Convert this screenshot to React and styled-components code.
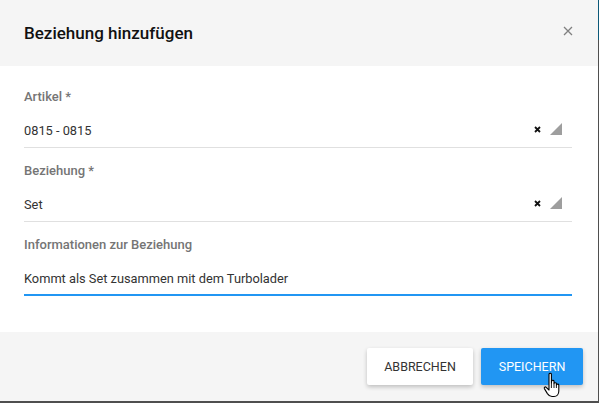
import React from "react";
import styled, { createGlobalStyle } from "styled-components";

const GlobalStyle = createGlobalStyle`
  html, body {
    margin: 0;
    padding: 0;
    width: 100%;
    height: 100%;
    overflow: hidden;
  }
  body {
    background: linear-gradient(#0c5878 0 40px, #4f4f4f 40px);
    font-family: Roboto, "Liberation Sans", Arial, sans-serif;
  }
`;

const fields = [
  { label: "Artikel *", value: "0815 - 0815", type: "select" },
  { label: "Beziehung *", value: "Set", type: "select" },
  { label: "Informationen zur Beziehung", value: "Kommt als Set zusammen mit dem Turbolader", type: "text" }
];

function App() {
  return (
    <>
      <GlobalStyle />
      <StDialog>
        <StHeader>
          <h2>Beziehung hinzufügen</h2>
          <StClose aria-label="schließen">
            <svg width="10" height="10" viewBox="0 0 10 10">
              <path d="M1 1 L9 9 M9 1 L1 9" stroke="#808080" strokeWidth="1.3" fill="none" />
            </svg>
          </StClose>
        </StHeader>

        <StBody>
          {fields.map((f) => (
            <StField key={f.label}>
              <label>{f.label}</label>
              <StInput focused={f.type === "text"}>
                <span>{f.value}</span>
                {f.type === "select" && (
                  <div className="icons">
                    <svg width="7" height="7" viewBox="0 0 7 7">
                      <path d="M1 1 L6 6 M6 1 L1 6" stroke="#111" strokeWidth="1.8" fill="none" />
                    </svg>
                    <svg width="12" height="12" viewBox="0 0 12 12">
                      <polygon points="12,0 12,12 0,12" fill="#9e9e9e" />
                    </svg>
                  </div>
                )}
              </StInput>
            </StField>
          ))}
        </StBody>

        <StFooter>
          <StButton>Abbrechen</StButton>
          <StButton primary>
            Speichern
            <svg className="cursor" width="22" height="27" viewBox="0 0 22 27">
              <path
                d="M6 2.2 C6 1 8.4 1 8.4 2.2 L8.4 11 L8.6 9.2 C8.6 8 11 8 11 9.2 L11 11.6 C11 10.4 13.4 10.4 13.4 11.6 L13.4 13 C13.4 11.8 15.8 11.8 15.8 13 L15.8 19 C15.8 22 14 24.5 11 24.5 L9 24.5 C6.8 24.5 5.6 23.4 4.4 21.6 L1.4 16.6 C0.8 15.5 2.2 14.4 3.2 15.3 L6 18 Z"
                fill="#fff"
                stroke="#000"
                strokeWidth="1.1"
                strokeLinejoin="round"
              />
              <path d="M8.4 11 L8.4 16 M11 11.6 L11 16 M13.4 13 L13.4 16" stroke="#000" strokeWidth="0.9" />
            </svg>
          </StButton>
        </StFooter>
      </StDialog>
    </>
  );
}

const StDialog = styled.div`
  width: 598px;
  height: 401px;
  background-color: #ffffff;
  display: flex;
  flex-direction: column;
`;

const StHeader = styled.div`
  height: 66px;
  flex-shrink: 0;
  background-color: #f5f5f5;
  display: flex;
  align-items: center;
  justify-content: space-between;
  padding: 0 24px 0 24px;
  box-sizing: border-box;

  h2 {
    margin: 0;
    font-size: 17px;
    font-weight: 500;
    color: #111;
    margin-top: -1px;
  }
`;

const StClose = styled.button`
  border: none;
  background: none;
  padding: 0;
  width: 10px;
  height: 10px;
  display: flex;
  margin-right: 1px;
  margin-top: -5px;
`;

const StBody = styled.div`
  flex: 1;
  padding: 23px 26px 0 24px;
  display: flex;
  flex-direction: column;
  gap: 15px;
`;

const StField = styled.div`
  display: flex;
  flex-direction: column;
  gap: 15px;

  label {
    font-size: 13px;
    line-height: 16px;
    font-weight: 500;
    color: #757575;
  }
`;

const StInput = styled.div`
  display: flex;
  align-items: center;
  justify-content: space-between;
  height: 20px;
  padding-bottom: ${(props) => (props.focused ? "6px" : "7px")};
  border-bottom: ${(props) => (props.focused ? "2px solid #2196f3" : "1px solid #e0e0e0")};
  font-size: 12.8px;
  font-weight: 400;
  color: #333333;

  .icons {
    display: flex;
    align-items: center;
    gap: 9px;
    margin-right: 10px;
    margin-top: -2px;
  }
`;

const StFooter = styled.div`
  height: 69px;
  flex-shrink: 0;
  background-color: #f5f5f5;
  display: flex;
  justify-content: flex-end;
  align-items: flex-start;
  gap: 8px;
  padding: 16px 15px 0 0;
  box-sizing: border-box;
`;

const StButton = styled.button`
  position: relative;
  height: 37px;
  padding: 0 16px;
  min-width: ${(props) => (props.primary ? "102px" : "106px")};
  border: none;
  border-radius: 2px;
  background-color: ${(props) => (props.primary ? "#2196f3" : "#ffffff")};
  color: ${(props) => (props.primary ? "#ffffff" : "#333333")};
  font-family: Roboto, "Liberation Sans", Arial, sans-serif;
  font-size: 12.5px;
  font-weight: 400;
  text-transform: uppercase;
  box-shadow: 0 2px 4px rgba(0, 0, 0, 0.22);

  .cursor {
    position: absolute;
    left: 62px;
    top: 24px;
  }
`;

export default App;
